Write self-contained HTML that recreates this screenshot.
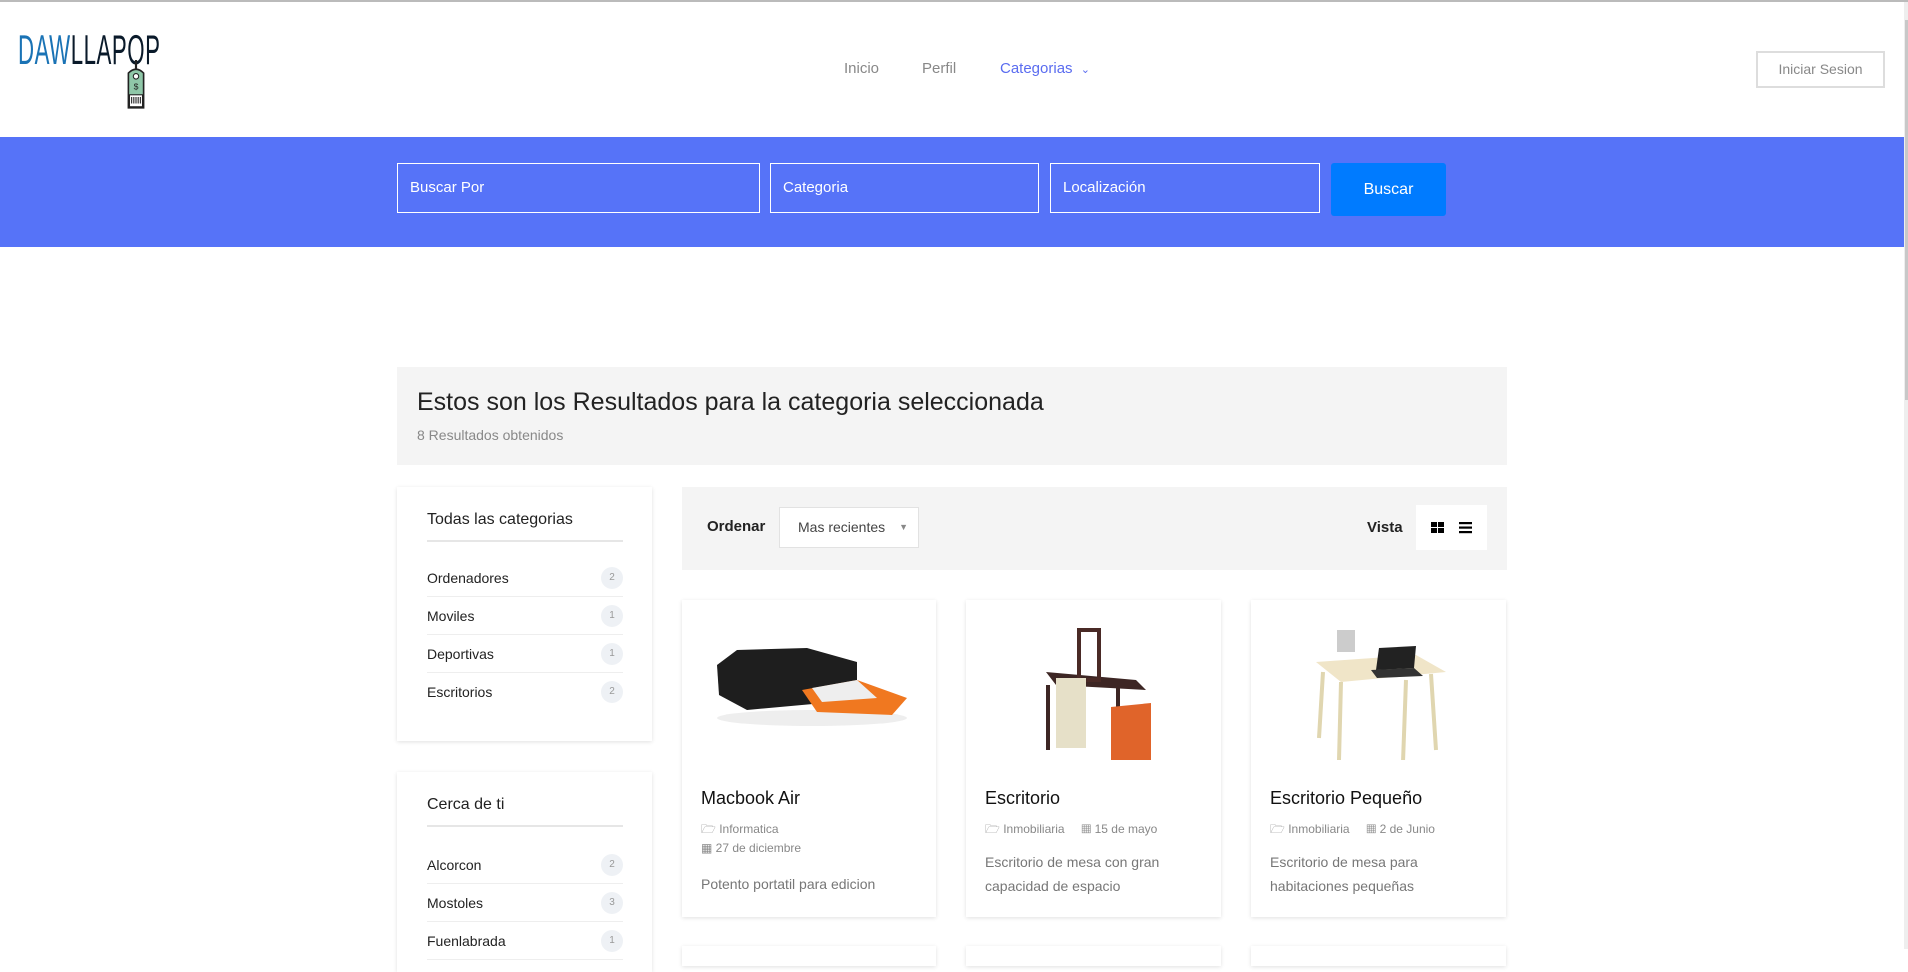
<!DOCTYPE html>
<html><head><meta charset="utf-8"><style>
*{box-sizing:border-box;margin:0;padding:0}
body{width:1908px;height:949px;overflow:hidden;background:#fff;font-family:"Liberation Sans",sans-serif;position:relative;color:#222}
.a{position:absolute}
.inp{position:absolute;top:163px;height:50px;border:1px solid #fff;color:#fff;font-size:15px;line-height:48px;padding-left:12px}
.card{position:absolute;background:#fff;box-shadow:0 1px 4px rgba(0,0,0,.12)}
.li{position:absolute;left:30px;width:196px;height:38px;border-bottom:1px solid #eee;font-size:14px;color:#222;line-height:38px}
.bd{position:absolute;right:0;top:8px;width:22px;height:22px;border-radius:50%;background:#eef1f5;color:#999;font-size:10px;text-align:center;line-height:22px}
.pt{position:absolute;left:19px;top:188px;font-size:18px;color:#111}
.meta{position:absolute;left:19px;font-size:12px;color:#888}
.desc{position:absolute;left:19px;top:250px;font-size:14px;color:#777;line-height:24px;width:220px}
</style></head><body>
<div class="a" style="left:0;top:0;width:1908px;height:2px;background:#bbb"></div>
<div class="a" style="left:1904px;top:2px;width:4px;height:947px;background:#eee"></div>
<div class="a" style="left:1905px;top:20px;width:3px;height:380px;background:#c8c8c8"></div>
<!-- logo -->
<div class="a" style="left:18px;top:27px;font-size:42px;letter-spacing:1px;transform:scaleX(.53);transform-origin:left;line-height:46px"><span style="color:#1a73b5">DAW</span><span style="color:#0a1a2a">LLAPOP</span></div>
<svg class="a" style="left:124px;top:60px" width="24" height="50" viewBox="0 0 22 46"><line x1="11" y1="0" x2="11" y2="12" stroke="#222" stroke-width="2"/><path d="M4 12 Q11 5 18 12 L18 44 L4 44Z" fill="#8fc7a8" stroke="#222" stroke-width="1.5"/><circle cx="11" cy="15" r="2.5" fill="#fff" stroke="#222"/><text x="11" y="27" font-size="8" text-anchor="middle" fill="#222" font-family="Liberation Sans">$</text><rect x="5" y="32" width="12" height="11" fill="#fff" stroke="#222"/><path d="M7 34v6M9 34v6M11 34v6M13 34v6M15 34v6" stroke="#222"/></svg>
<!-- nav -->
<div class="a" style="left:844px;top:60px;font-size:15px;color:#888">Inicio</div>
<div class="a" style="left:922px;top:60px;font-size:15px;color:#888">Perfil</div>
<div class="a" style="left:1000px;top:60px;font-size:15px;color:#5a6cf0">Categorias <span style="font-size:11px;margin-left:4px">&#8964;</span></div>
<div class="a" style="left:1756px;top:51px;width:129px;height:37px;border:2px solid #ddd;font-size:14px;color:#888;text-align:center;line-height:33px">Iniciar Sesion</div>
<!-- blue band -->
<div class="a" style="left:0;top:137px;width:1904px;height:110px;background:#5673f8"></div>
<div class="inp" style="left:397px;width:363px">Buscar Por</div>
<div class="inp" style="left:770px;width:269px">Categoria</div>
<div class="inp" style="left:1050px;width:270px">Localización</div>
<div class="a" style="left:1331px;top:163px;width:115px;height:53px;background:#007bff;border-radius:3px;color:#fff;font-size:16px;text-align:center;line-height:53px">Buscar</div>
<!-- results header -->
<div class="a" style="left:397px;top:367px;width:1110px;height:98px;background:#f4f4f4"></div>
<div class="a" style="left:417px;top:388px;font-size:25px;color:#222">Estos son los Resultados para la categoria seleccionada</div>
<div class="a" style="left:417px;top:427px;font-size:14px;color:#888">8 Resultados obtenidos</div>
<!-- sidebar -->
<div class="card" style="left:397px;top:487px;width:255px;height:254px">
<div class="a" style="left:30px;top:24px;font-size:16px;color:#222">Todas las categorias</div>
<div class="a" style="left:30px;top:53px;width:196px;height:2px;background:#e6e6e6"></div>
<div class="li" style="top:72px">Ordenadores<span class="bd">2</span></div>
<div class="li" style="top:110px">Moviles<span class="bd">1</span></div>
<div class="li" style="top:148px">Deportivas<span class="bd">1</span></div>
<div class="li" style="top:186px;border:none">Escritorios<span class="bd">2</span></div>
</div>
<div class="card" style="left:397px;top:772px;width:255px;height:200px">
<div class="a" style="left:30px;top:24px;font-size:16px;color:#222">Cerca de ti</div>
<div class="a" style="left:30px;top:53px;width:196px;height:2px;background:#e6e6e6"></div>
<div class="li" style="top:74px">Alcorcon<span class="bd">2</span></div>
<div class="li" style="top:112px">Mostoles<span class="bd">3</span></div>
<div class="li" style="top:150px">Fuenlabrada<span class="bd">1</span></div>
</div>
<!-- toolbar -->
<div class="a" style="left:682px;top:487px;width:825px;height:83px;background:#f4f4f4"></div>
<div class="a" style="left:707px;top:518px;font-size:15px;font-weight:bold;color:#222">Ordenar</div>
<div class="a" style="left:779px;top:507px;width:140px;height:41px;background:#fff;border:1px solid #e2e2e2;font-size:14px;color:#444;line-height:39px;padding-left:18px">Mas recientes <span style="position:absolute;right:10px;font-size:9px;color:#888">&#9660;</span></div>
<div class="a" style="left:1367px;top:519px;font-size:15px;font-weight:bold;color:#222">Vista</div>
<div class="a" style="left:1416px;top:505px;width:71px;height:45px;background:#fff"></div>
<svg class="a" style="left:1431px;top:522px" width="14" height="12"><rect x="0" y="0" width="6" height="5"/><rect x="7" y="0" width="6" height="5"/><rect x="0" y="6" width="6" height="5"/><rect x="7" y="6" width="6" height="5"/></svg>
<svg class="a" style="left:1459px;top:522px" width="13" height="12"><rect y="0" width="13" height="2.2"/><rect y="4.5" width="13" height="2.2"/><rect y="9" width="13" height="2.2"/></svg>
<!-- product cards -->
<div class="card" style="left:682px;top:600px;width:254px;height:317px">
<svg class="a" style="left:25px;top:40px" width="210" height="90"><ellipse cx="105" cy="78" rx="95" ry="8" fill="#eee"/><path d="M10 25 L30 10 L100 8 L150 22 L150 60 L40 70 L12 55Z" fill="#1e1e1e"/><path d="M95 50 L150 40 L200 58 L185 75 L110 72Z" fill="#f07820"/><path d="M105 48 L150 40 L170 58 L115 62Z" fill="#eee"/></svg>
<div class="pt">Macbook Air</div>
<div class="meta" style="top:220px">&#128449; Informatica</div>
<div class="meta" style="top:241px">&#9638; 27 de diciembre</div>
<div class="desc" style="top:272px">Potento portatil para edicion</div>
</div>
<div class="card" style="left:966px;top:600px;width:255px;height:317px">
<svg class="a" style="left:60px;top:10px" width="150" height="150"><path d="M20 62 L110 70 L120 80 L30 75Z" fill="#3d2624"/><rect x="20" y="75" width="4" height="65" fill="#3d2624"/><rect x="90" y="78" width="4" height="70" fill="#3d2624"/><rect x="53" y="20" width="20" height="50" fill="none" stroke="#4a2a26" stroke-width="4"/><rect x="30" y="68" width="30" height="70" fill="#e6e0c8"/><path d="M85 97 L125 93 L125 160 L85 160Z" fill="#e0642a"/></svg>
<div class="pt">Escritorio</div>
<div class="meta" style="top:220px">&#128449; Inmobiliaria &nbsp;&nbsp;&nbsp;&nbsp;&#9638; 15 de mayo</div>
<div class="desc">Escritorio de mesa con gran capacidad de espacio</div>
</div>
<div class="card" style="left:1251px;top:600px;width:255px;height:317px">
<svg class="a" style="left:60px;top:10px" width="150" height="150"><path d="M5 52 L105 45 L135 62 L30 72Z" fill="#f0e5c8"/><path d="M12 62 L8 128 M30 72 L28 150 M120 64 L125 140 M95 70 L92 152" stroke="#e0d6b0" stroke-width="4"/><path d="M68 38 L105 36 L103 58 L65 60Z" fill="#222"/><path d="M60 60 L103 58 L112 66 L66 68Z" fill="#333"/><rect x="26" y="20" width="18" height="22" fill="#ccc"/></svg>
<div class="pt">Escritorio Pequeño</div>
<div class="meta" style="top:220px">&#128449; Inmobiliaria &nbsp;&nbsp;&nbsp;&nbsp;&#9638; 2 de Junio</div>
<div class="desc">Escritorio de mesa para habitaciones pequeñas</div>
</div>
<div class="card" style="left:682px;top:946px;width:254px;height:20px"></div>
<div class="card" style="left:966px;top:946px;width:255px;height:20px"></div>
<div class="card" style="left:1251px;top:946px;width:255px;height:20px"></div>
</body></html>
